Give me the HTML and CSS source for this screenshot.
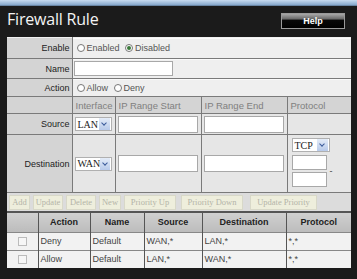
FILE: index.html
```html
<!DOCTYPE html>
<html>
<head>
  <meta charset="UTF-8">
  <title>Firewall Rule</title>
  <link rel="stylesheet" href="styles.css">
</head>
<body>
  <div class="topbar"></div>
  <div class="header">
    <h1 class="title">Firewall Rule</h1>
    <div class="btn-help">Help</div>
  </div>
  <div class="panel">
    <table class="form">
      <colgroup>
        <col class="w-lbl"><col class="w-if"><col class="w-ip"><col class="w-ip"><col class="w-proto">
      </colgroup>
      <tr class="r-enable">
        <td class="lbl">Enable</td>
        <td class="val" colspan="4">
          <span class="radio"></span><span class="opt">Enabled</span>
          <span class="radio on"></span><span class="opt">Disabled</span>
        </td>
      </tr>
      <tr class="r-name">
        <td class="lbl">Name</td>
        <td class="val" colspan="4"><span class="txt txt-name"></span></td>
      </tr>
      <tr class="r-action">
        <td class="lbl">Action</td>
        <td class="val" colspan="4">
          <span class="radio"></span><span class="opt">Allow</span>
          <span class="radio"></span><span class="opt">Deny</span>
        </td>
      </tr>
      <tr class="r-head">
        <td class="lbl"></td>
        <td class="hd">Interface</td>
        <td class="hd">IP Range Start</td>
        <td class="hd">IP Range End</td>
        <td class="hd">Protocol</td>
      </tr>
      <tr class="r-src">
        <td class="lbl">Source</td>
        <td class="cell"><span class="sel sel-if"><span class="sel-txt">LAN</span><span class="arrow"></span></span></td>
        <td class="cell"><span class="txt txt-ip"></span></td>
        <td class="cell"><span class="txt txt-ip"></span></td>
        <td class="cell"></td>
      </tr>
      <tr class="r-dst">
        <td class="lbl">Destination</td>
        <td class="cell"><span class="sel sel-if"><span class="sel-txt">WAN</span><span class="arrow"></span></span></td>
        <td class="cell"><span class="txt txt-ip"></span></td>
        <td class="cell"><span class="txt txt-ip"></span></td>
        <td class="cell proto">
          <span class="sel sel-proto"><span class="sel-txt">TCP</span><span class="arrow"></span></span>
          <div class="ports">
            <div class="port-col">
              <span class="txt txt-port"></span>
              <span class="txt txt-port"></span>
            </div>
            <span class="dash">-</span>
          </div>
        </td>
      </tr>
    </table>
    <div class="buttons">
      <span class="btn b-add">Add</span>
      <span class="btn b-upd">Update</span>
      <span class="btn b-del">Delete</span>
      <span class="btn b-new">New</span>
      <span class="btn b-up">Priority Up</span>
      <span class="btn b-down">Priority Down</span>
      <span class="btn b-upp">Update Priority</span>
    </div>
    <table class="list">
      <colgroup>
        <col class="w-chk"><col class="w-act"><col class="w-name"><col class="w-src"><col class="w-dst"><col class="w-pr">
      </colgroup>
      <tr class="list-head">
        <th></th>
        <th>Action</th>
        <th>Name</th>
        <th>Source</th>
        <th>Destination</th>
        <th>Protocol</th>
      </tr>
      <tr>
        <td class="c-chk"><span class="chk"></span></td>
        <td>Deny</td>
        <td>Default</td>
        <td>WAN,*</td>
        <td>LAN,*</td>
        <td>*,*</td>
      </tr>
      <tr>
        <td class="c-chk"><span class="chk"></span></td>
        <td>Allow</td>
        <td>Default</td>
        <td>LAN,*</td>
        <td>WAN,*</td>
        <td>*,*</td>
      </tr>
    </table>
  </div>
</body>
</html>
```

FILE: styles.css
```css
* {
  margin: 0;
  padding: 0;
  box-sizing: border-box;
  font-family: "Liberation Sans", Arial, sans-serif;
}
body {
  width: 357px;
  height: 279px;
  overflow: hidden;
  background-color: #1b1b1b;
}
.topbar {
  height: 6px;
  background: linear-gradient(#c8dcf0, #86a8cc);
  border-bottom: 1px solid #6a86a4;
}
.header {
  height: 31px;
  display: flex;
  align-items: flex-start;
  justify-content: space-between;
  padding: 2px 12px 0 7px;
}
h1.title {
  color: #f4f4f4;
  font-family: "Open Sans", "DejaVu Sans", sans-serif;
  font-size: 16px;
  font-weight: normal;
  letter-spacing: -0.2px;
  line-height: 22px;
}
.btn-help {
  width: 64px;
  height: 16px;
  margin-top: 5px;
  border: 1px solid #9a9a9a;
  background: linear-gradient(#a8a8a8 0%, #6a6a6a 35%, #080808 45%, #000 100%);
  color: #fff;
  font-size: 9px;
  font-weight: bold;
  text-align: center;
  line-height: 14px;
}
.panel {
  width: 344px;
  margin-left: 7px;
  background-color: #e4e4e4;
}
table {
  border-collapse: collapse;
  width: 100%;
  table-layout: fixed;
}
col.w-lbl { width: 65px; }
col.w-if { width: 43px; }
col.w-ip { width: 86px; }
col.w-proto { width: 64px; }
table.form td {
  border: 1px solid #7a7a7a;
  font-size: 9px;
  color: #333;
  white-space: nowrap;
}
table.form tr:first-child td {
  border-top: 1px solid #f0f0f0;
}
table.form td.lbl {
  background-color: #d4d4d4;
  text-align: right;
  padding-right: 2px;
  color: #222;
  border-left: none;
}
table.form td.val {
  background-color: #efefef;
  padding-left: 4px;
  box-shadow: inset 0 1px 0 #fafafa;
  border-right: none;
}
.r-enable { height: 21px; }
.r-name { height: 20px; }
.r-action { height: 18px; }
.r-head { height: 17px; }
.r-src { height: 21px; }
.r-dst { height: 58px; }
.radio {
  display: inline-block;
  width: 8px;
  height: 8px;
  border: 1px solid #777;
  border-radius: 50%;
  background: #fff;
  vertical-align: -1px;
  margin-right: 2px;
  position: relative;
}
.radio.on::after {
  content: "";
  position: absolute;
  left: 1px;
  top: 1px;
  width: 4px;
  height: 4px;
  border-radius: 50%;
  background: #3a7a3a;
}
.opt {
  color: #555;
  margin-right: 3px;
}
.txt {
  display: inline-block;
  background: #fff;
  border: 1px solid #a8a8a8;
  vertical-align: middle;
}
.txt-name {
  width: 99px;
  height: 15px;
  margin-left: -3px;
}
table.form td.hd {
  background-color: #d4d4d4;
  color: #808080;
  padding-left: 3px;
  font-size: 9.5px;
  border-top-color: #d4d4d4;
}
table.form td:last-child { border-right: none; }
table.form td.cell {
  background-color: #e6e6e6;
  padding-left: 2px;
}
.txt-ip {
  width: 80px;
  height: 17px;
}
.sel {
  display: inline-flex;
  align-items: center;
  background: #fff;
  border: 1px solid #b0b0b0;
  height: 14px;
  vertical-align: middle;
}
.sel-txt {
  font-family: "Liberation Serif", serif;
  font-size: 10px;
  color: #222;
  padding-left: 2px;
  flex: 1;
}
.arrow {
  width: 11px;
  height: 12px;
  margin-right: 1px;
  background: linear-gradient(#e4ecf8, #b8caea);
  position: relative;
}
.arrow::after {
  content: "";
  position: absolute;
  left: 3px;
  top: 3px;
  width: 3px;
  height: 3px;
  border-right: 1.5px solid #3a5a9a;
  border-bottom: 1.5px solid #3a5a9a;
  transform: rotate(45deg);
}
.sel-if { width: 37px; }
.sel-proto { width: 38px; margin-top: 2px; }
table.form td.proto {
  vertical-align: top;
  padding-left: 4px;
  padding-top: 1px;
}
.ports {
  display: flex;
  align-items: center;
  margin-top: 3px;
}
.port-col {
  display: flex;
  flex-direction: column;
  gap: 2px;
}
.txt-port {
  width: 35px;
  height: 15px;
}
.dash {
  margin-left: 3px;
  color: #444;
}
.buttons {
  height: 20px;
  display: flex;
  align-items: center;
  gap: 3px;
  padding-left: 2px;
  background-color: #dcdcdc;
  border-bottom: 2px solid #555;
}
.btn {
  height: 15px;
  background-color: #eeeedc;
  border: 1px solid #d8d8c8;
  font-family: "Liberation Serif", serif;
  font-size: 8.5px;
  color: #b4b4a8;
  line-height: 13px;
  text-align: center;
  white-space: nowrap;
}
.b-add { width: 21px; }
.b-upd { width: 30px; }
.b-del { width: 30px; }
.b-new { width: 22px; }
.b-up { width: 52px; }
.b-down { width: 62px; margin-left: 2px; }
.b-upp { width: 67px; margin-left: 4px; }
col.w-chk { width: 31px; }
col.w-act { width: 52px; }
col.w-name { width: 54px; }
col.w-src { width: 58px; }
col.w-dst { width: 84px; }
col.w-pr { width: 65px; }
table.list th {
  height: 19px;
  background: linear-gradient(#d0d0d0, #bcbcbc);
  font-size: 9px;
  color: #222;
  font-weight: bold;
  border-left: 1px solid #555;
}
table.list td {
  height: 18px;
  background-color: #f2f2f2;
  font-size: 9px;
  color: #444;
  border-left: 1px solid #555;
  border-top: 1px solid #888;
  padding-left: 2px;
}
table.list th:first-child,
table.list td:first-child { border-left: none; }
table.list td.c-chk { text-align: center; padding-left: 0; }
.chk {
  display: inline-block;
  width: 9px;
  height: 9px;
  border: 1px solid #bbb;
  background: #f6f6f6;
  vertical-align: middle;
}
```
